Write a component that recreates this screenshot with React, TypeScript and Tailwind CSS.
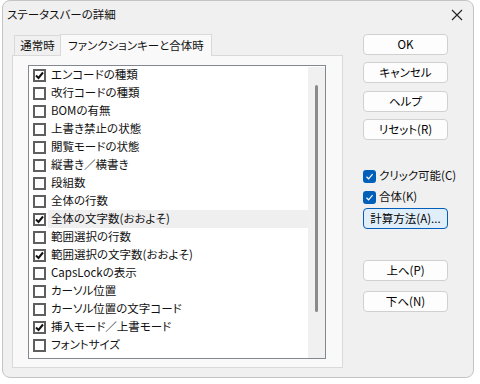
import React from "react";

const items: { label: string; checked: boolean; selected?: boolean }[] = [
  { label: "エンコードの種類", checked: true },
  { label: "改行コードの種類", checked: false },
  { label: "BOMの有無", checked: false },
  { label: "上書き禁止の状態", checked: false },
  { label: "閲覧モードの状態", checked: false },
  { label: "縦書き／横書き", checked: false },
  { label: "段組数", checked: false },
  { label: "全体の行数", checked: false },
  { label: "全体の文字数(おおよそ)", checked: true, selected: true },
  { label: "範囲選択の行数", checked: false },
  { label: "範囲選択の文字数(おおよそ)", checked: true },
  { label: "CapsLockの表示", checked: false },
  { label: "カーソル位置", checked: false },
  { label: "カーソル位置の文字コード", checked: false },
  { label: "挿入モード／上書モード", checked: true },
  { label: "フォントサイズ", checked: false },
];

function Check({ checked }: { checked: boolean }) {
  return (
    <div className="w-[13px] h-[13px] border-2 border-[#5f5f5f] bg-white flex items-center justify-center shrink-0">
      {checked && (
        <svg width="9" height="9" viewBox="0 0 9 9">
          <path d="M1 4.5 L3.5 7 L8 1.5" stroke="#111" strokeWidth="2" fill="none" />
        </svg>
      )}
    </div>
  );
}

function BlueCheck() {
  return (
    <div className="w-[13px] h-[13px] rounded-[3px] bg-[#005fb8] flex items-center justify-center shrink-0">
      <svg width="9" height="9" viewBox="0 0 9 9">
        <path d="M1.5 4.8 L3.6 6.8 L7.6 2.2" stroke="#fff" strokeWidth="1.2" fill="none" />
      </svg>
    </div>
  );
}

function Btn({ children, focused }: { children: React.ReactNode; focused?: boolean }) {
  return (
    <div
      className={
        "w-[85px] h-[21px] rounded-[4px] flex items-center justify-center text-[11.5px] leading-none text-black " +
        (focused
          ? "border border-[#005fb8] bg-[#e0eef9]"
          : "border border-[#d0d0d0] bg-[#fdfdfd]")
      }
    >
      {children}
    </div>
  );
}

export default function App() {
  return (
    <div
      className="w-[480px] h-[384px] bg-white overflow-hidden [font-feature-settings:'palt'] text-[11.5px] text-[#111]"
      style={{ fontFamily: "'Noto Sans CJK JP', 'Noto Sans', sans-serif" }}
    >
      <div className="ml-[2px] w-[472px] h-[378px] bg-[#f0f0f0] border border-[#c4c4c4] rounded-[8px] flex flex-col">
        {/* Title bar */}
        <div className="h-[27px] flex items-center justify-between pl-[4px] pr-[10px] shrink-0">
          <span className="text-[11.5px] leading-none">ステータスバーの詳細</span>
          <svg width="12" height="12" viewBox="0 0 12 12">
            <path d="M1 1 L11 11 M11 1 L1 11" stroke="#222" strokeWidth="1.1" />
          </svg>
        </div>
        {/* Body */}
        <div className="flex pl-[9px] pt-[5px]">
          {/* Left: tabs */}
          <div className="w-[331px] flex flex-col">
            <div className="flex items-end h-[22px]">
              <div className="w-[47px] h-[20px] border border-b-0 border-[#d9d9d9] flex items-center justify-center text-[11.5px] leading-none ml-[2px]">
                通常時
              </div>
              <div className="w-[152px] h-[22px] border border-b-0 border-[#d9d9d9] bg-[#f9f9f9] -ml-px flex items-center justify-center text-[11.5px] leading-none relative top-px">
                ファンクションキーと合体時
              </div>
            </div>
            <div className="h-[313px] border border-[#d9d9d9] bg-[#f9f9f9] pt-[9px] pl-[15px]">
              <div className="w-[298px] h-[294px] border border-[#828790] bg-white flex">
                <div className="flex-1 flex flex-col">
                  {items.map((it) => (
                    <div key={it.label} className="h-[18px] flex items-center pl-[4px]">
                      <Check checked={it.checked} />
                      <div
                        className={
                          "flex-1 h-[18px] flex items-center pl-[3px] ml-[2px] text-[11.5px] leading-none " +
                          (it.selected ? "bg-[#efefef]" : "")
                        }
                      >
                        {it.label}
                      </div>
                    </div>
                  ))}
                </div>
                <div className="w-[17px] bg-[#f0f0f0] flex justify-center pt-[18px] pb-[46px] mt-px">
                  <div className="w-[3px] h-full bg-[#8a8a8a] rounded-full" />
                </div>
              </div>
            </div>
          </div>
          {/* Right: buttons */}
          <div className="ml-[20px] flex flex-col pt-[1px]">
            <Btn>OK</Btn>
            <div className="h-[7px]" />
            <Btn>キャンセル</Btn>
            <div className="h-[8px]" />
            <Btn>ヘルプ</Btn>
            <div className="h-[7px]" />
            <Btn>リセット(R)</Btn>
            <div className="h-[28px]" />
            <div className="flex items-center gap-[3px] h-[16px]">
              <BlueCheck />
              <span className="text-[11.5px] leading-none">クリック可能(C)</span>
            </div>
            <div className="h-[5px]" />
            <div className="flex items-center gap-[3px] h-[16px]">
              <BlueCheck />
              <span className="text-[11.5px] leading-none">合体(K)</span>
            </div>
            <div className="h-[3px]" />
            <Btn focused>計算方法(A)...</Btn>
            <div className="h-[31px]" />
            <Btn>上へ(P)</Btn>
            <div className="h-[10px]" />
            <Btn>下へ(N)</Btn>
          </div>
        </div>
      </div>
    </div>
  );
}
